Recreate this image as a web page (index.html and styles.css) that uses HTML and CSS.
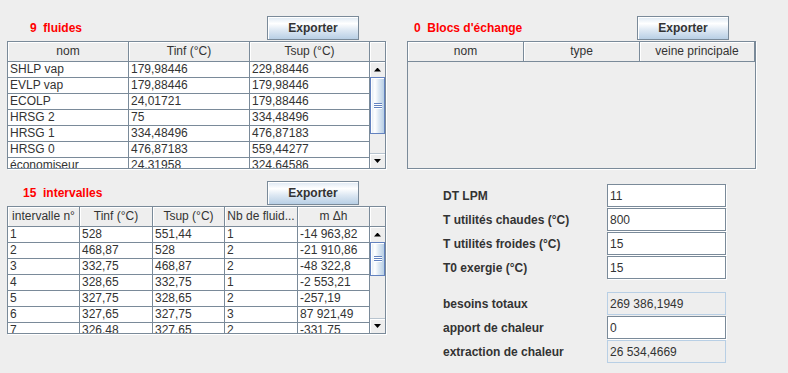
FILE: index.html
```html
<!DOCTYPE html>
<html lang="fr">
<head>
<meta charset="UTF-8" />
<meta name="viewport" content="width=device-width, initial-scale=1" />
<title>Pincement</title>
<link rel="stylesheet" href="styles.css">
</head>
<body>

<div class="fenetre">

  <!-- fluides -->
  <section class="bloc">
    <div class="bloc-tete">
      <span class="titre titre-fluides">9&nbsp;&nbsp;fluides</span>
      <button type="button" class="btn">Exporter</button>
    </div>
    <div class="defil">
      <div class="tableau cols-fluides">
        <div class="ligne entete"><div>nom</div><div>Tinf (°C)</div><div>Tsup (°C)</div></div>
        <div class="ligne"><div>SHLP vap</div><div>179,98446</div><div>229,88446</div></div>
        <div class="ligne"><div>EVLP vap</div><div>179,88446</div><div>179,98446</div></div>
        <div class="ligne"><div>ECOLP</div><div>24,01721</div><div>179,88446</div></div>
        <div class="ligne"><div>HRSG 2</div><div>75</div><div>334,48496</div></div>
        <div class="ligne"><div>HRSG 1</div><div>334,48496</div><div>476,87183</div></div>
        <div class="ligne"><div>HRSG 0</div><div>476,87183</div><div>559,44277</div></div>
        <div class="ligne"><div>économiseur</div><div>24,31958</div><div>324,64586</div></div>
      </div>
      <div class="barre">
        <div class="coin"></div>
        <div class="fleche haut"></div>
        <div class="curseur curseur-fluides"><span class="grip"></span></div>
        <div class="piste"></div>
        <div class="fleche bas"></div>
      </div>
    </div>
  </section>

  <!-- blocs d'échange -->
  <section class="bloc">
    <div class="bloc-tete">
      <span class="titre titre-blocs">0&nbsp;&nbsp;Blocs d'échange</span>
      <button type="button" class="btn">Exporter</button>
    </div>
    <div class="defil">
      <div class="tableau cols-blocs">
        <div class="ligne entete"><div>nom</div><div>type</div><div>veine principale</div></div>
      </div>
    </div>
  </section>

  <!-- intervalles -->
  <section class="bloc">
    <div class="bloc-tete">
      <span class="titre titre-intervalles">15&nbsp;&nbsp;intervalles</span>
      <button type="button" class="btn">Exporter</button>
    </div>
    <div class="defil">
      <div class="tableau cols-intervalles">
        <div class="ligne entete"><div>intervalle n°</div><div>Tinf (°C)</div><div>Tsup (°C)</div><div>Nb de fluid...</div><div>m Δh</div></div>
        <div class="ligne"><div>1</div><div>528</div><div>551,44</div><div>1</div><div>-14 963,82</div></div>
        <div class="ligne"><div>2</div><div>468,87</div><div>528</div><div>2</div><div>-21 910,86</div></div>
        <div class="ligne"><div>3</div><div>332,75</div><div>468,87</div><div>2</div><div>-48 322,8</div></div>
        <div class="ligne"><div>4</div><div>328,65</div><div>332,75</div><div>1</div><div>-2 553,21</div></div>
        <div class="ligne"><div>5</div><div>327,75</div><div>328,65</div><div>2</div><div>-257,19</div></div>
        <div class="ligne"><div>6</div><div>327,65</div><div>327,75</div><div>3</div><div>87 921,49</div></div>
        <div class="ligne"><div>7</div><div>326,48</div><div>327,65</div><div>2</div><div>-331,75</div></div>
      </div>
      <div class="barre">
        <div class="coin"></div>
        <div class="fleche haut"></div>
        <div class="curseur curseur-intervalles"><span class="grip"></span></div>
        <div class="piste"></div>
        <div class="fleche bas"></div>
      </div>
    </div>
  </section>

  <!-- paramètres -->
  <div class="reglages">
    <div class="groupe">
      <label for="dt">DT LPM</label>
      <input id="dt" type="text" value="11" />
      <label for="tchaud">T utilités chaudes (°C)</label>
      <input id="tchaud" type="text" value="800" />
      <label for="tfroid">T utilités froides (°C)</label>
      <input id="tfroid" type="text" value="15" />
      <label for="t0">T0 exergie (°C)</label>
      <input id="t0" type="text" value="15" />
    </div>
    <div class="groupe groupe-bilan">
      <label for="besoins">besoins totaux</label>
      <input id="besoins" class="lecture" type="text" value="269 386,1949" readonly />
      <label for="apport">apport de chaleur</label>
      <input id="apport" type="text" value="0" />
      <label for="extraction">extraction de chaleur</label>
      <input id="extraction" class="lecture" type="text" value="26 534,4669" readonly />
    </div>
  </div>

</div>

</body>
</html>
```

FILE: styles.css
```css
/* BASE */
* {
  box-sizing: border-box;
}
html, body {
  margin: 0;
  padding: 0;
  width: 788px;
  height: 373px;
  overflow: hidden;
  background: #eeeeee;
  font-family: "Liberation Sans", Arial, sans-serif;
  font-size: 12px;
  color: #333333;
}

/* GRILLE GENERALE */
.fenetre {
  display: grid;
  grid-template-columns: 379px 349px;
  column-gap: 21px;
  row-gap: 12px;
  padding: 16px 0 0 7px;
  align-items: start;
}

/* EN-TETE D'UN BLOC */
.bloc-tete {
  display: flex;
  align-items: center;
  height: 24px;
  margin-bottom: 1px;
}
.titre {
  color: #ff0000;
  font-weight: bold;
  white-space: nowrap;
}
.titre-fluides { padding-left: 23px; }
.titre-blocs { padding-left: 7px; }
.titre-intervalles { padding-left: 16px; }

.btn {
  margin: 0 27px 0 auto;
  width: 92px;
  height: 24px;
  padding: 0;
  border: 1px solid #7a8a99;
  background: linear-gradient(to bottom, #dde8f3, #ffffff 30%, #dde8f3 60%, #b8cfe5);
  box-shadow: inset 1px 1px 0 #ffffff;
  font: bold 12px "Liberation Sans", Arial, sans-serif;
  color: #333333;
}

/* TABLEAUX */
.defil {
  display: flex;
  height: 128px;
  border: 1px solid #7a8a99;
  box-shadow: 1px 1px 0 #ffffff;
  overflow: hidden;
}
.tableau {
  flex: none;
}
.cols-fluides { width: 362px; }
.cols-blocs { width: 347px; }
.cols-intervalles { width: 362px; }

.ligne {
  display: grid;
  height: 16px;
}
.cols-fluides .ligne { grid-template-columns: 121px 121px 120px; }
.cols-blocs .ligne { grid-template-columns: 116px 116px 115px; }
.cols-intervalles .ligne { grid-template-columns: 72px 73px 72px 73px 72px; }

.ligne > div {
  background: #ffffff;
  border-right: 1px solid #7a8a99;
  border-bottom: 1px solid #7a8a99;
  padding: 0 2px;
  line-height: 15px;
  white-space: nowrap;
  overflow: hidden;
}
.ligne.entete {
  height: 20px;
}
.ligne.entete > div {
  background: #eeeeee;
  box-shadow: inset 1px 1px 0 #ffffff;
  text-align: center;
  line-height: 19px;
  padding: 0;
}

/* BARRE DE DEFILEMENT */
.barre {
  width: 15px;
  display: flex;
  flex-direction: column;
  background: #eeeeee;
}
.coin {
  height: 20px;
  flex: none;
  border-bottom: 1px solid #7a8a99;
  box-shadow: inset 1px 1px 0 #ffffff;
}
.fleche {
  height: 15px;
  flex: none;
  display: flex;
  align-items: center;
  justify-content: center;
  box-shadow: inset 1px 1px 0 #ffffff;
}
.fleche::before {
  content: "";
  width: 7px;
  height: 4px;
  background: #000000;
}
.fleche.haut::before {
  clip-path: polygon(50% 0, 100% 100%, 0 100%);
}
.fleche.bas {
  border-top: 1px solid #b8c4cf;
}
.fleche.bas::before {
  clip-path: polygon(0 0, 100% 0, 50% 100%);
}
.curseur {
  flex: none;
  display: flex;
  align-items: center;
  justify-content: center;
  border: 1px solid #6382bf;
  background: linear-gradient(to right, #dde8f3, #ffffff 30%, #dde8f3 60%, #b8cfe5);
  box-shadow: inset 1px 1px 0 #ffffff;
}
.curseur-fluides { height: 57px; }
.curseur-intervalles { height: 34px; }
.grip {
  width: 8px;
  height: 6px;
  background: repeating-linear-gradient(to bottom, #6382bf 0 1px, #ffffff 1px 2px);
}
.piste {
  flex: 1;
}

/* PARAMETRES */
.reglages {
  padding: 3px 0 0 36px;
}
.groupe {
  display: grid;
  grid-template-columns: 164px 119px;
  row-gap: 1px;
  align-items: center;
}
.groupe-bilan {
  margin-top: 13px;
}
.groupe label {
  font-weight: bold;
  white-space: nowrap;
}
.groupe input {
  width: 119px;
  height: 23px;
  margin: 0;
  padding: 0 2px;
  border: 1px solid #7a8a99;
  box-shadow: 1px 1px 0 #ffffff;
  background: #ffffff;
  font: 12px "Liberation Sans", Arial, sans-serif;
  color: #333333;
  outline: none;
}
.groupe input.lecture {
  background: #eeeeee;
  border-color: #b8cfe5;
  box-shadow: none;
}
```
